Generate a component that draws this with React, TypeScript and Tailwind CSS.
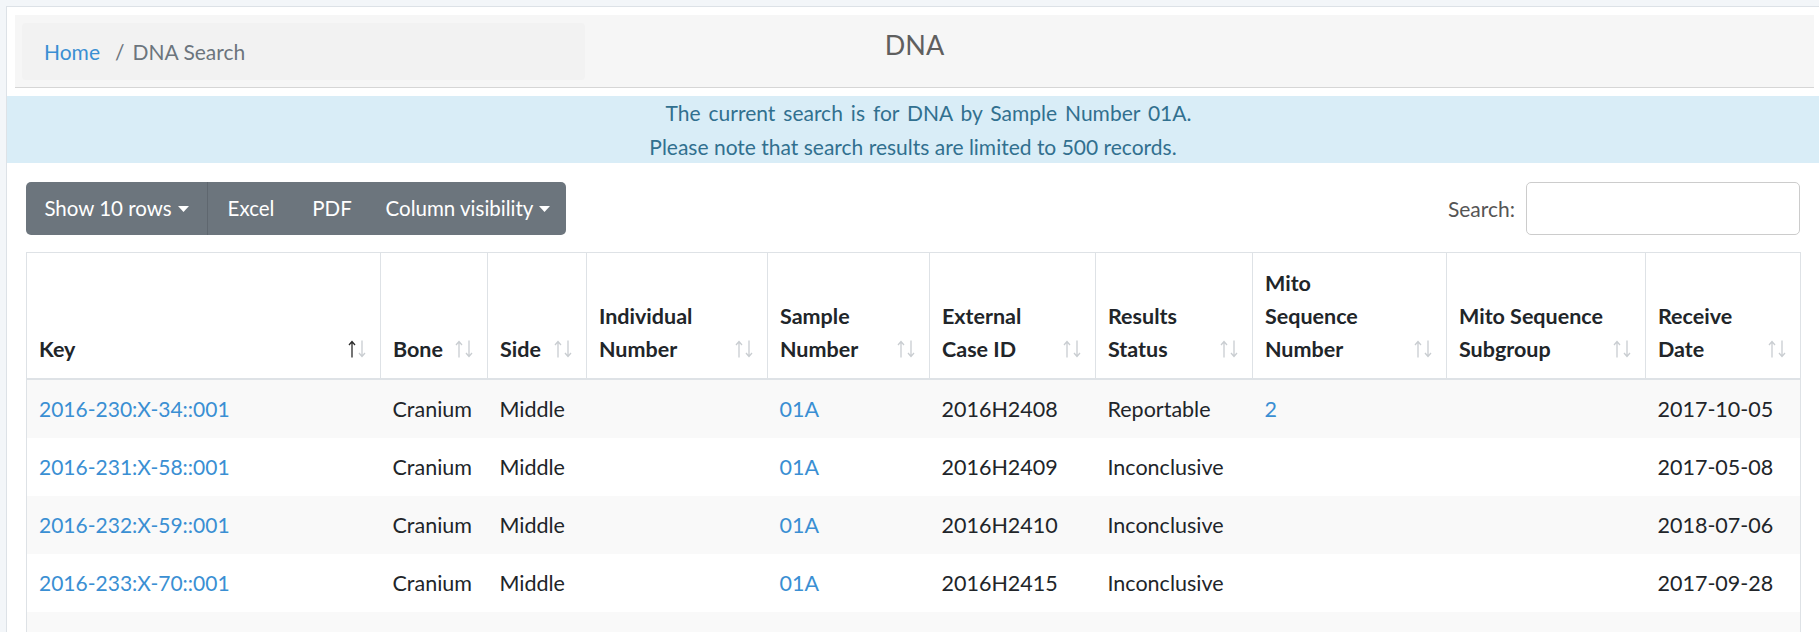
import React from "react";

const cols = [354, 107, 99, 181, 162, 166, 157, 194, 199, 155];

const headers: string[][] = [
  ["Key"],
  ["Bone"],
  ["Side"],
  ["Individual", "Number"],
  ["Sample", "Number"],
  ["External", "Case ID"],
  ["Results", "Status"],
  ["Mito", "Sequence", "Number"],
  ["Mito Sequence", "Subgroup"],
  ["Receive", "Date"],
];

type Row = {
  key: string;
  bone: string;
  side: string;
  sample: string;
  ext: string;
  status: string;
  mito: string;
  date: string;
};

const rows: Row[] = [
  { key: "2016-230:X-34::001", bone: "Cranium", side: "Middle", sample: "01A", ext: "2016H2408", status: "Reportable", mito: "2", date: "2017-10-05" },
  { key: "2016-231:X-58::001", bone: "Cranium", side: "Middle", sample: "01A", ext: "2016H2409", status: "Inconclusive", mito: "", date: "2017-05-08" },
  { key: "2016-232:X-59::001", bone: "Cranium", side: "Middle", sample: "01A", ext: "2016H2410", status: "Inconclusive", mito: "", date: "2018-07-06" },
  { key: "2016-233:X-70::001", bone: "Cranium", side: "Middle", sample: "01A", ext: "2016H2415", status: "Inconclusive", mito: "", date: "2017-09-28" },
  { key: "", bone: "", side: "", sample: "", ext: "", status: "", mito: "", date: "" },
];

function Arrow({ up, color }: { up: boolean; color: string }) {
  return (
    <svg width="8" height="18" viewBox="0 0 8 18" fill="none" stroke={color} strokeWidth="1.3">
      {up ? (
        <path d="M4 1.5V17.5M1 5L4 1.5L7 5" />
      ) : (
        <path d="M4 0.5V16.5M1 13L4 16.5L7 13" />
      )}
    </svg>
  );
}

function Caret() {
  return (
    <svg width="11" height="6" viewBox="0 0 11 6" className="ml-[6px] inline-block" fill="white">
      <path d="M0 0H11L5.5 6Z" />
    </svg>
  );
}

const td = "px-[12px] py-[12px] leading-[34px] whitespace-nowrap";

export default function App() {
  return (
    <div className="w-[1819px] h-[632px] overflow-hidden bg-[#f3f6f9] pl-[6px] pt-[6px] font-['Lato',sans-serif] text-[21.5px] text-[#212529]">
      <div className="min-h-[700px] border-l border-t border-[#dde2e7] bg-white">
        {/* Header bar */}
        <div className="pt-[8px] pl-[8px] pr-[5px]">
          <div className="grid h-[73px] grid-cols-3 border-b border-[#d6d6d6] bg-[#f6f6f6]">
            <div className="pl-[7px] pt-[8px]">
              <div className="flex h-[57px] w-[563px] items-center rounded-[4px] bg-[#f2f2f2] pl-[22px] text-[21px] leading-[30px]">
                <span className="text-[#3a8fd3]">Home</span>
                <span className="ml-[15px] text-[#6c757d]">/</span>
                <span className="ml-[8px] text-[#6c757d]">DNA Search</span>
              </div>
            </div>
            <div className="pt-[12px] text-center text-[27px] leading-[36px] text-[#5f5f5f]">DNA</div>
            <div />
          </div>
        </div>

        {/* Alert */}
        <div className="mt-[8px] flex h-[67px] flex-col justify-center bg-[#d9edf7] text-center text-[21px] leading-[34px] text-[#31708f]">
          <div className="pl-[31px] [word-spacing:2.6px]">The current search is for DNA by Sample Number 01A.</div>
          <div>Please note that search results are limited to 500 records.</div>
        </div>

        <div className="pl-[19px] pr-[19px]">
          {/* Toolbar */}
          <div className="mt-[19px] flex h-[53px] items-center justify-between">
            <div className="flex h-[53px] overflow-hidden rounded-[5px] text-[20.5px] text-white">
              <div className="flex w-[181px] items-center justify-center bg-[#6c757d]">
                Show 10 rows
                <Caret />
              </div>
              <div className="w-[1px] bg-[#5f676f]" />
              <div className="flex w-[86px] items-center justify-center bg-[#6c757d]">Excel</div>
              <div className="flex w-[76px] items-center justify-center bg-[#6c757d]">PDF</div>
              <div className="flex w-[196px] items-center justify-center bg-[#6c757d]">
                Column visibility
                <Caret />
              </div>
            </div>
            <div className="flex items-center">
              <span className="mr-[11px] text-[21px] text-[#555]">Search:</span>
              <div className="h-[53px] w-[274px] rounded-[5px] border border-[#ccc] bg-white" />
            </div>
          </div>

          {/* Table */}
          <table className="mt-[17px] w-[1774px] table-fixed border-collapse border border-[#dee2e6]">
            <colgroup>
              {cols.map((w, i) => (
                <col key={i} style={{ width: w }} />
              ))}
            </colgroup>
            <thead>
              <tr>
                {headers.map((h, i) => (
                  <th
                    key={i}
                    className="relative border-x border-b-2 border-[#dee2e6] pb-[12px] pl-[12px] pr-[30px] pt-[14px] text-left align-bottom font-bold leading-[33px] whitespace-nowrap"
                  >
                    {h.map((line, j) => (
                      <div key={j}>{line}</div>
                    ))}
                    <span className="absolute bottom-[20px] right-[24px] flex">
                      <Arrow up color={i === 0 ? "#2b2b2b" : "#c9cdd1"} />
                    </span>
                    <span className="absolute bottom-[20px] right-[14px] flex">
                      <Arrow up={false} color="#c9cdd1" />
                    </span>
                  </th>
                ))}
              </tr>
            </thead>
            <tbody>
              {rows.map((r, i) => (
                <tr key={i} className={i % 2 === 0 ? "bg-[#f9f9f9]" : "bg-white"}>
                  <td className={`${td} text-[21px] text-[#3a8fd3]`}>{r.key}</td>
                  <td className={td}>{r.bone}</td>
                  <td className={td}>{r.side}</td>
                  <td className={td}></td>
                  <td className={`${td} text-[#3a8fd3]`}>{r.sample}</td>
                  <td className={td}>{r.ext}</td>
                  <td className={td}>{r.status}</td>
                  <td className={`${td} text-[#3a8fd3]`}>{r.mito}</td>
                  <td className={td}></td>
                  <td className={td}>{r.date}</td>
                </tr>
              ))}
            </tbody>
          </table>
        </div>
      </div>
    </div>
  );
}
